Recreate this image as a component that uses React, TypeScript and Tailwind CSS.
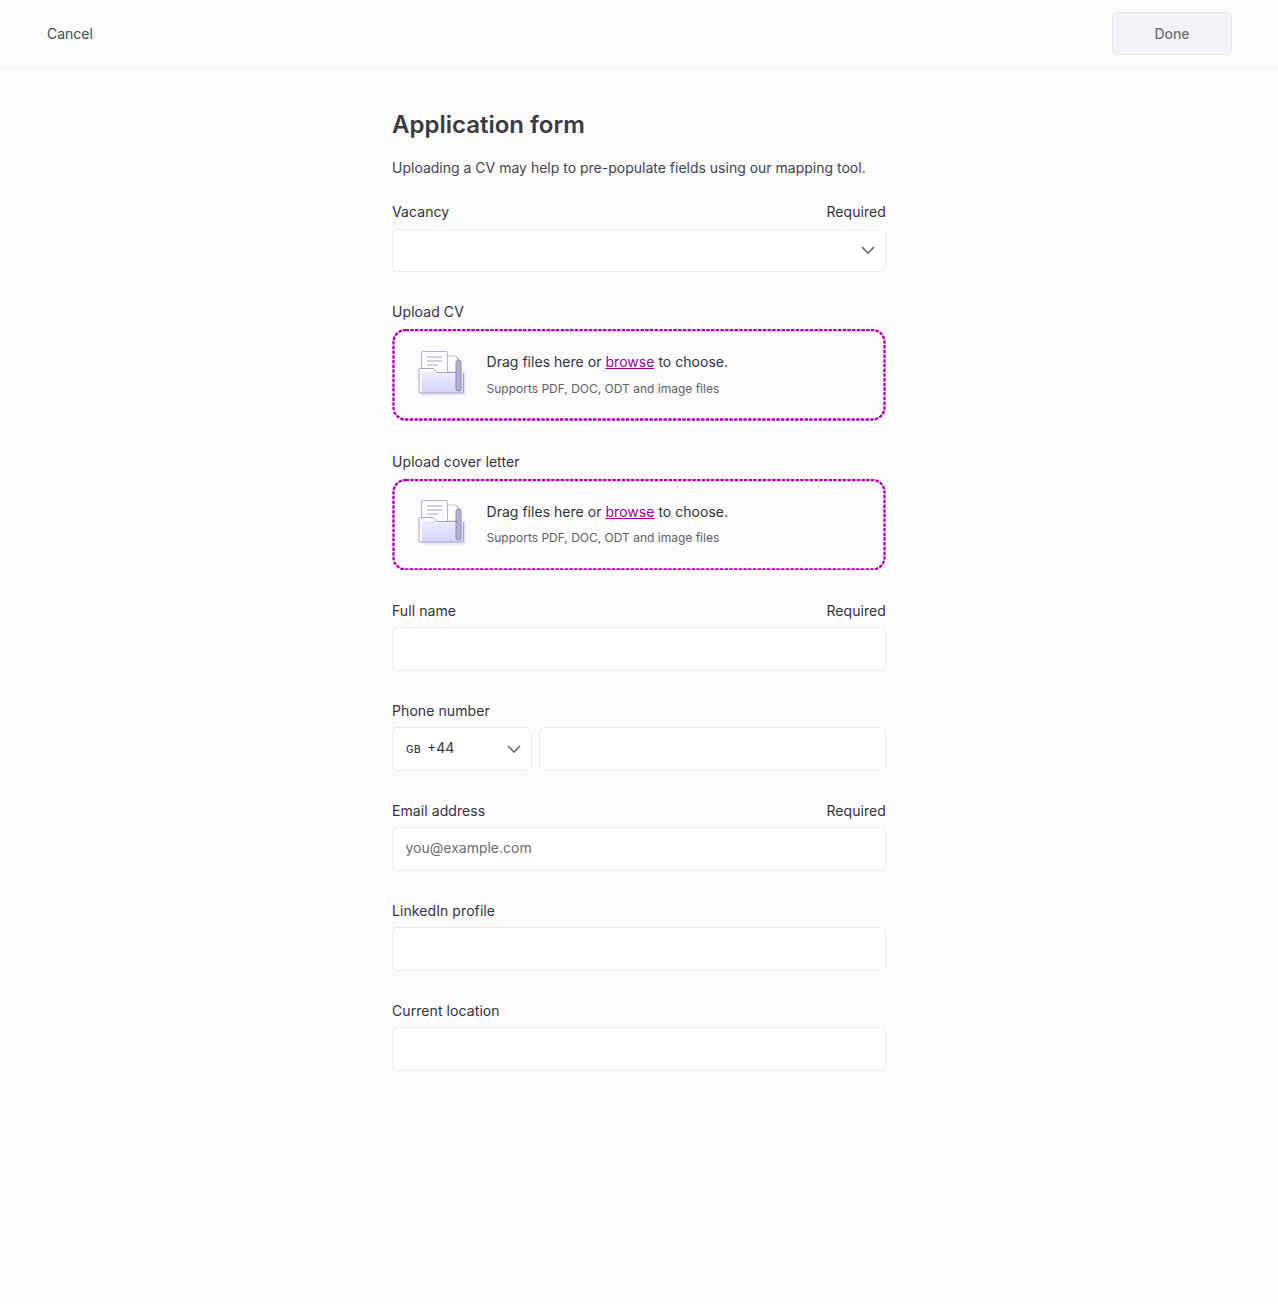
const Chevron = ({ className }: { className: string }) => (
  <svg className={className} viewBox="0 0 14 8" fill="none" stroke="#5f5f73" strokeWidth="1.5">
    <path d="M1 1l6 6 6-6" />
  </svg>
);

const FolderIcon = ({ id }: { id: string }) => (
  <svg className="w-[50px] h-[48px] shrink-0" viewBox="0 1 50 48" fill="none">
    <defs>
      <linearGradient id={id} x1="0" y1="0" x2="0" y2="1">
        <stop offset="0" stopColor="#eeeefe" />
        <stop offset="1" stopColor="#d2d2fa" />
      </linearGradient>
    </defs>
    {/* back page */}
    <path d="M29 6h8.500l2 2.500V22H29z" fill="#fff" stroke="#c6c6d4" />
    {/* front page */}
    <rect x="3.500" y="1.500" width="26" height="22" rx="1" fill="#fcfcfe" stroke="#b4b4c6" />
    <path d="M9 7h15M9 11h15M9 15h11" stroke="#a6a6ba" />
    {/* folder */}
    <path d="M1 20a1.500 1.500 0 0 1 1.500-1.500h13l3.500 4h26.500V42a1 1 0 0 1-1 1H2a1 1 0 0 1-1-1z" fill="#fbfbff" />
    <rect x="4" y="22" width="44" height="23.500" fill="#e8e8fc" />
    <path d="M4 22h14l1 1h27v20H4z" fill={`url(#${id})`} />
    <path d="M1 20a1.500 1.500 0 0 1 1.500-1.500h13l3.500 4h19M45.500 23v19a1 1 0 0 1-1 1H2a1 1 0 0 1-1-1V20" stroke="#a4a4ba" />
    {/* spine */}
    <path d="M37.500 6.500l5 4.500" stroke="#a4a4ba" />
    <rect x="38" y="10" width="5" height="31" rx="2.500" fill="#b1b1d6" stroke="#8e8eae" />
  </svg>
);

const Field = ({
  label,
  required,
  children,
}: {
  label: string;
  required?: boolean;
  children: React.ReactNode;
}) => (
  <div className="mb-[27.5px]">
    <div className="flex justify-between items-center h-6 mb-[5px] text-[14px] tracking-[0.08px] text-[#33333d]">
      <span>{label}</span>
      {required && <span>Required</span>}
    </div>
    {children}
  </div>
);

const inputClass =
  "w-full h-[43.5px] px-[12.5px] pb-[3px] bg-white border border-[#ebebf0] rounded-md text-[14px] text-[#33333d] placeholder:text-[#6b6b76] outline-none";

const Dropzone = ({ id }: { id: string }) => (
  <div className="pt-[0.8px] pb-[0.6px]">
    <div className="relative h-[91.5px] rounded-xl flex items-center gap-[18.5px] pl-[26px] pb-[1.1px]">
      <svg className="absolute inset-0 w-full h-full" fill="none">
        <rect
          x="1.500"
          y="1"
          width="491"
          height="89.500"
          rx="12"
          stroke="#b400b4"
          strokeWidth="2.300"
          strokeDasharray="3.500 1.200"
        />
      </svg>
      <FolderIcon id={id} />
      <div>
        <p className="text-[14px] leading-6 tracking-[0.03px] text-[#33333d]">
          Drag files here or{" "}
          <a href="#" className="underline text-[#990099]">
            browse
          </a>{" "}
          to choose.
        </p>
        <p className="mt-[4.7px] text-[12px] leading-5 text-[#5f5f6b]">
          Supports PDF, DOC, ODT and image files
        </p>
      </div>
    </div>
  </div>
);

export default function App() {
  return (
    <div className="min-h-[1304px] bg-[#fbfbfb] font-['Inter',sans-serif]">
      <header className="h-[68px] flex items-center justify-between pl-[47px] pr-[46px] border-b border-[#f2f2f4]">
        <button className="text-[14px] text-[#4a4a4a]">Cancel</button>
        <button className="w-[120px] h-[43px] bg-[#f4f3f8] border border-[#e9e9ee] rounded-md text-[14px] font-medium text-[#71717f]">
          Done
        </button>
      </header>
      <main className="w-[494px] mx-auto pt-[41px]">
        <h1 className="text-[24px] leading-8 font-semibold text-[#3a3a40]">Application form</h1>
        <p className="mt-[15px] mb-[19.65px] text-[14px] leading-6 text-[#44444c]">
          Uploading a CV may help to pre-populate fields using our mapping tool.
        </p>
        <Field label="Vacancy" required>
          <div className="relative">
            <input className={inputClass} />
            <Chevron className="absolute right-[11px] top-[17px] w-[14px] h-[8px]" />
          </div>
        </Field>
        <Field label="Upload CV">
          <Dropzone id="folder-cv" />
        </Field>
        <Field label="Upload cover letter">
          <Dropzone id="folder-letter" />
        </Field>
        <Field label="Full name" required>
          <input className={inputClass} />
        </Field>
        <Field label="Phone number">
          <div className="flex gap-[7px]">
            <div className="relative w-[140px] h-[43.5px] shrink-0 bg-white border border-[#ebebf0] rounded-md flex items-center pl-[13px] text-[#33333d]">
              <span className="text-[10px] font-medium tracking-[0.5px] w-[21px] mt-[1px]">GB</span>
              <span className="text-[14px] pb-[3px]">+44</span>
              <Chevron className="absolute right-[10px] top-[17px] w-[14px] h-[8px]" />
            </div>
            <input className={inputClass} />
          </div>
        </Field>
        <Field label="Email address" required>
          <input className={inputClass} placeholder="you@example.com" />
        </Field>
        <Field label="LinkedIn profile">
          <input className={inputClass} />
        </Field>
        <Field label="Current location">
          <input className={inputClass} />
        </Field>
      </main>
    </div>
  );
}
